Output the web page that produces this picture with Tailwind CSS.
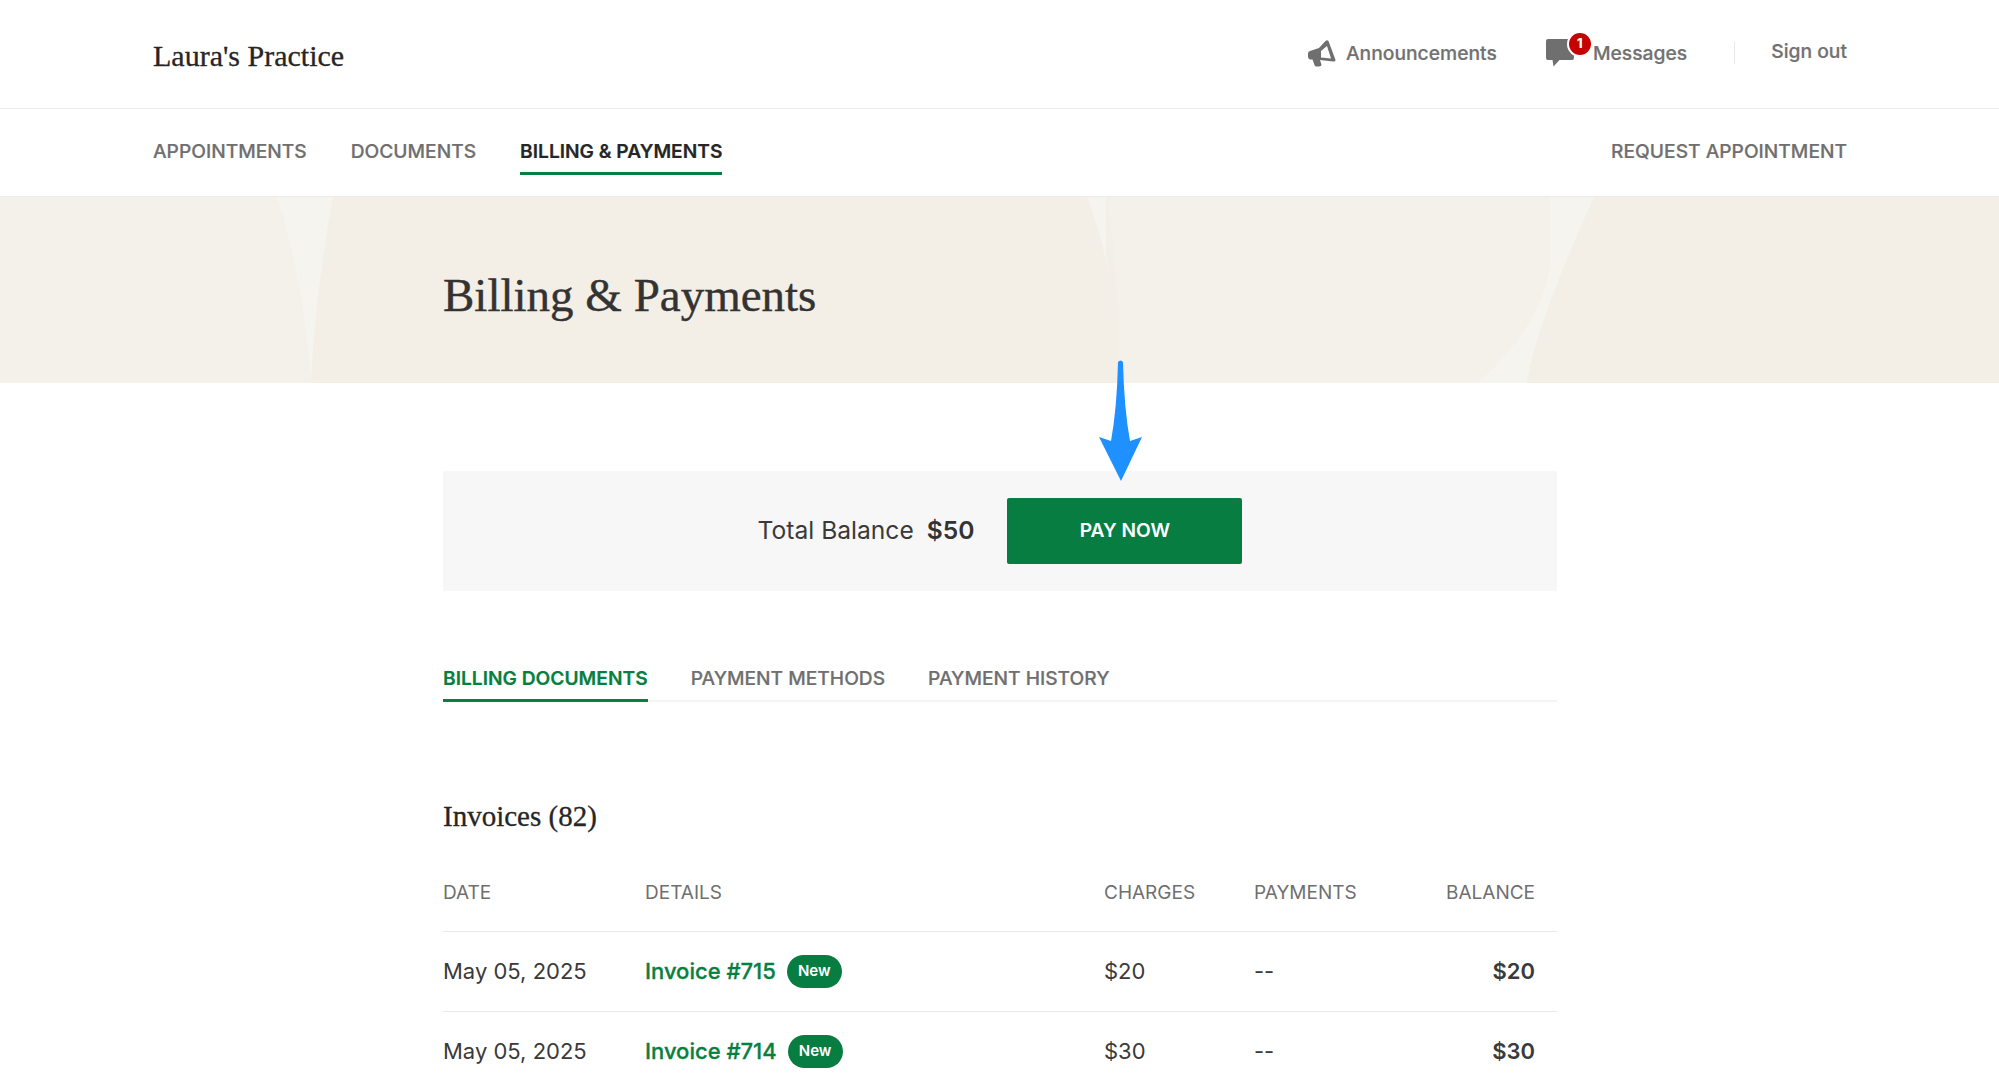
<!DOCTYPE html>
<html lang="en">
<head>
  <meta charset="UTF-8" />
  <meta name="viewport" content="width=device-width, initial-scale=1.0"/>
  <title>Billing & Payments</title>
  <script src="https://cdn.jsdelivr.net/npm/@tailwindcss/browser@4"></script>
</head>
<body class="bg-white h-screen overflow-hidden font-['Inter',sans-serif] text-[#333333]">

  <!-- Top bar -->
  <header class="h-[109px] border-b border-[#ececec] pl-[153px] pr-[152px] flex items-center justify-between">
    <div class="font-['Liberation_Serif',serif] text-[30px] [-webkit-text-stroke:0.3px] text-[#262626] mt-[3px]">Laura's Practice</div>
    <div class="flex items-center text-[19.3px] font-medium [-webkit-text-stroke:0.2px] text-[#717171] mt-[-2px]">
      <a class="flex items-center">
        <svg class="w-[28px] h-[27px]" viewBox="0 0 28 27" fill="#6f6f6f">
          <path fill-rule="evenodd" d="M17.500 1 Q19 -0.500 20.500 1 L27.500 20 Q27.500 22 25 21.500 L12 20 L13.500 24.500 Q13.500 26.500 11 26.500 L8.500 26.500 Q7 26.500 6.500 25 L4.500 19.500 L2 19.500 Q0.500 19 0 17 L0 13 Q0.500 11.500 2 11 L11 8 Z M19 6 L13 11 L13 17.500 L23 18.500 Z"/>
        </svg>
        <span class="ml-[10px]">Announcements</span>
      </a>
      <a class="flex items-center ml-[49px]">
        <div class="relative w-[28px] h-[28px]">
          <svg class="w-[28px] h-[28px]" viewBox="0 0 28 28" fill="#6f6f6f">
            <path d="M2 0 H26 Q28 0 28 2 V19 Q28 21 26 21 H13.500 L7.500 27.500 L6.500 21 H2 Q0 21 0 19 V2 Q0 0 2 0 Z"/>
          </svg>
          <span class="absolute left-[23px] top-[-6px] w-[22px] h-[22px] rounded-full bg-[#c60303] ring-2 ring-white text-white text-[13px] font-bold flex items-center justify-center">1</span>
        </div>
        <span class="ml-[19px]">Messages</span>
      </a>
      <div class="w-px h-[22px] bg-[#e8e8e8] ml-[47px]"></div>
      <a class="ml-[36px] mt-[-4px]">Sign out</a>
    </div>
  </header>

  <!-- Main nav -->
  <nav class="h-[88px] pl-[153px] pr-[152px] flex justify-between text-[19.2px] font-medium [-webkit-text-stroke:0.2px] text-[#6f6f6f] border-b border-[#ececec]">
    <div class="flex gap-[44px]">
      <a class="pt-[28px] h-[66px]">APPOINTMENTS</a>
      <a class="pt-[28px] h-[66px]">DOCUMENTS</a>
      <a class="pt-[28px] h-[66px] text-[#262626] font-semibold border-b-[3px] border-[#07803f]">BILLING &amp; PAYMENTS</a>
    </div>
    <a class="pt-[28px]">REQUEST APPOINTMENT</a>
  </nav>

  <!-- Hero -->
  <section class="relative h-[186px] bg-[#f3eee6] pl-[443px] flex items-center overflow-hidden">
    <svg class="absolute inset-0 w-full h-full" viewBox="0 0 1999 186" preserveAspectRatio="none">
      <path d="M0 0 H277 Q305 90 311 186 H0 Z" fill="#f3f1e9"/>
      <path d="M277 0 H333 Q316 90 311 186 Q305 90 277 0 Z" fill="#f6f4ee"/>
      <path d="M1087 0 H1106 V60 Q1118 120 1118 186 Q1118 80 1087 0 Z" fill="#f6f4ee"/>
      <path d="M1106 0 H1550 V70 Q1540 130 1478 186 H1119 Q1120 80 1106 0 Z" fill="#f3f1e9"/>
      <path d="M1550 0 H1594 Q1535 130 1527 186 H1478 Q1540 130 1550 70 Z" fill="#f6f4ee"/>
    </svg>
    <h1 class="relative font-['Liberation_Serif',serif] text-[47px] [-webkit-text-stroke:0.4px] text-[#333333] mt-[10px]">Billing &amp; Payments</h1>
  </section>

  <main class="w-[1114px] ml-[443px]">
    <!-- Balance -->
    <div class="mt-[88px] h-[120px] bg-[#f7f7f7] flex items-center justify-center">
      <span class="text-[24.6px] text-[#3a3a3a] mt-[-2px]">Total Balance</span>
      <span class="text-[24.6px] font-semibold ml-[13px] mt-[-2px]">$50</span>
      <button class="ml-[33px] w-[235px] h-[66px] pb-[2px] rounded-[2px] bg-[#077d42] text-white text-[19.2px] font-semibold">PAY NOW</button>
    </div>

    <!-- Tabs -->
    <div class="mt-[68px] pt-[5px] flex gap-[43px] border-b-2 border-[#f4f4f4] text-[19.2px] font-medium [-webkit-text-stroke:0.2px] text-[#6f6f6f] h-[43px]">
      <a class="text-[#07803f] font-semibold border-b-[3px] border-[#07803f] h-[38px]">BILLING DOCUMENTS</a>
      <a>PAYMENT METHODS</a>
      <a>PAYMENT HISTORY</a>
    </div>

    <h2 class="mt-[93px] font-['Liberation_Serif',serif] text-[29px] [-webkit-text-stroke:0.3px] text-[#262626]">Invoices (82)</h2>

    <!-- Invoice table -->
    <div class="mt-[40px] grid grid-cols-[202px_459px_150px_1fr_auto] pr-[22px] text-[19px] text-[#6f6f6f] h-[52px]">
      <div>DATE</div>
      <div>DETAILS</div>
      <div>CHARGES</div>
      <div>PAYMENTS</div>
      <div>BALANCE</div>
    </div>
    <div class="border-t border-[#e9e9e9] h-[80px] grid grid-cols-[202px_459px_150px_1fr_auto] items-center pr-[22px] text-[22px] text-[#3a3a3a]">
      <div>May 05, 2025</div>
      <div class="flex items-center">
        <a class="text-[#07803f] font-medium [-webkit-text-stroke:0.3px]">Invoice #715</a>
        <span class="ml-[11px] w-[55px] h-[33px] pt-[1px] rounded-full bg-[#077d42] text-white text-[15px] font-semibold flex items-center justify-center">New</span>
      </div>
      <div>$20</div>
      <div>--</div>
      <div class="font-semibold">$20</div>
    </div>
    <div class="border-t border-[#e9e9e9] h-[80px] grid grid-cols-[202px_459px_150px_1fr_auto] items-center pr-[22px] text-[22px] text-[#3a3a3a]">
      <div>May 05, 2025</div>
      <div class="flex items-center">
        <a class="text-[#07803f] font-medium [-webkit-text-stroke:0.3px]">Invoice #714</a>
        <span class="ml-[11px] w-[55px] h-[33px] pt-[1px] rounded-full bg-[#077d42] text-white text-[15px] font-semibold flex items-center justify-center">New</span>
      </div>
      <div>$30</div>
      <div>--</div>
      <div class="font-semibold">$30</div>
    </div>
  </main>

  <!-- Annotation arrow -->
  <svg class="absolute left-[1095px] top-[358px] w-[50px] h-[126px]" viewBox="0 0 50 126" fill="#1e90ff">
    <path d="M23 4 Q25.500 1 28 4 Q29 50 35 83 L47 79 L26 123 L4 79 L16 83 Q22 50 23 4 Z"/>
  </svg>
</body>
</html>
